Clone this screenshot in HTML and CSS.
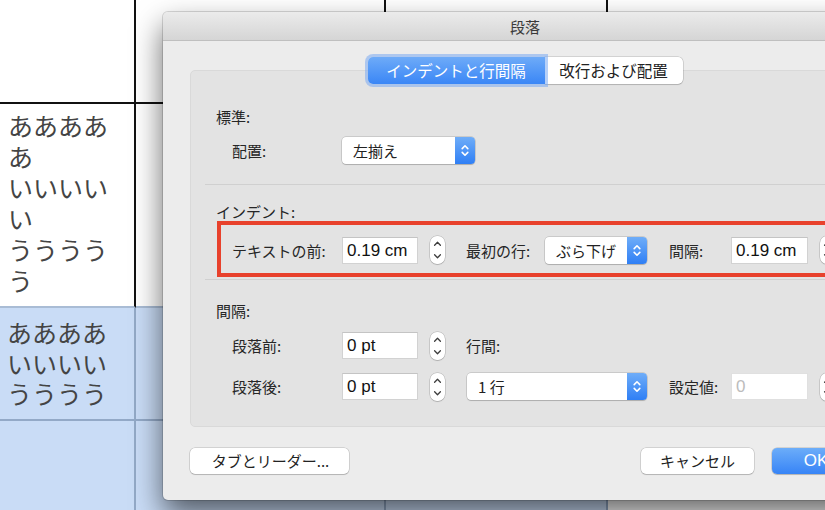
FILE: index.html
```html
<!DOCTYPE html>
<html lang="ja">
<head>
<meta charset="utf-8">
<title>段落</title>
<link rel="stylesheet" href="styles.css">
</head>
<body>
<div class="doc">
  <div class="cell"></div><div class="cell"></div><div class="cell"></div><div class="cell c4"></div>
  <div class="cell pre txt">ああああ<br>あ<br>いいいい<br>い<br>うううう<br>う</div>
  <div class="cell pre"></div><div class="cell pre"></div><div class="cell c4"></div>
  <div class="cell sel txt t2">ああああ<br>いいいい<br>うううう</div>
  <div class="cell sel"></div><div class="cell sel"></div><div class="cell c4"></div>
  <div class="cell sel"></div><div class="cell sel"></div><div class="cell sel"></div><div class="cell c4"></div>
</div>

<div class="dialog">
  <div class="titlebar">段落</div>
  <div class="dlg-body">
    <div class="group">
      <div class="tabs">
        <span class="tab on">インデントと行間隔</span><span class="tab off">改行および配置</span>
      </div>

      <div class="heading h-std">標準:</div>
      <div class="row r-align">
        <span class="lbl">配置:</span>
        <div class="popup w-align"><span class="pv">左揃え</span><span class="pa"><svg width="8" height="15" viewBox="0 0 8 15"><path d="M1.2 5.6 L4 2.8 L6.8 5.6 M1.2 9.4 L4 12.2 L6.8 9.4"/></svg></span></div>
      </div>

      <div class="sep s1"></div>

      <div class="heading h-ind">インデント:</div>
      <div class="row hl">
        <span class="lbl">テキストの前:</span>
        <div class="field">0.19 cm</div>
        <div class="stepper"><svg width="15" height="28" viewBox="0 0 15 28"><path d="M4.6 9.2 L7.5 6.3 L10.4 9.2 M4.6 18.8 L7.5 21.7 L10.4 18.8"/></svg></div>
        <span class="lbl l2">最初の行:</span>
        <div class="popup w-first"><span class="pv">ぶら下げ</span><span class="pa"><svg width="8" height="15" viewBox="0 0 8 15"><path d="M1.2 5.6 L4 2.8 L6.8 5.6 M1.2 9.4 L4 12.2 L6.8 9.4"/></svg></span></div>
        <span class="lbl l3">間隔:</span>
        <div class="field f2">0.19 cm</div>
        <div class="stepper"><svg width="15" height="28" viewBox="0 0 15 28"><path d="M4.6 9.2 L7.5 6.3 L10.4 9.2 M4.6 18.8 L7.5 21.7 L10.4 18.8"/></svg></div>
      </div>

      <div class="sep s2"></div>

      <div class="heading h-sp">間隔:</div>
      <div class="row r-before">
        <span class="lbl">段落前:</span>
        <div class="field">0 pt</div>
        <div class="stepper"><svg width="15" height="28" viewBox="0 0 15 28"><path d="M4.6 9.2 L7.5 6.3 L10.4 9.2 M4.6 18.8 L7.5 21.7 L10.4 18.8"/></svg></div>
        <span class="lbl l2">行間:</span>
      </div>
      <div class="row r-after">
        <span class="lbl">段落後:</span>
        <div class="field">0 pt</div>
        <div class="stepper"><svg width="15" height="28" viewBox="0 0 15 28"><path d="M4.6 9.2 L7.5 6.3 L10.4 9.2 M4.6 18.8 L7.5 21.7 L10.4 18.8"/></svg></div>
        <div class="popup w-line"><span class="pv">1 行</span><span class="pa"><svg width="8" height="15" viewBox="0 0 8 15"><path d="M1.2 5.6 L4 2.8 L6.8 5.6 M1.2 9.4 L4 12.2 L6.8 9.4"/></svg></span></div>
        <span class="lbl l3">設定値:</span>
        <div class="field f2 dis">0</div>
        <div class="stepper"><svg width="15" height="28" viewBox="0 0 15 28"><path d="M4.6 9.2 L7.5 6.3 L10.4 9.2 M4.6 18.8 L7.5 21.7 L10.4 18.8"/></svg></div>
      </div>
    </div>

    <div class="buttons">
      <div class="btn b-tabs">タブとリーダー...</div>
      <div class="btn b-cancel">キャンセル</div>
      <div class="btn b-ok">OK</div>
    </div>
  </div>
</div>
</body>
</html>
```

FILE: styles.css
```css
* { box-sizing: border-box; }
html, body { margin: 0; padding: 0; }
body {
  width: 825px;
  height: 510px;
  overflow: hidden;
  position: relative;
  background: #fff;
  font-family: "Liberation Sans", "Noto Sans CJK JP", sans-serif;
}

/* ---------- document table ---------- */
.doc {
  display: grid;
  grid-template-columns: 136px 250px 222px 400px;
  grid-template-rows: 104px 204px 113px 120px;
}
.cell {
  border-right: 2px solid #111;
  border-bottom: 2px solid #111;
  background: #fff;
}
.cell.c4 { border-right: none; }
.cell.pre { border-bottom-color: #a9bcd5; }
.cell.sel { background: #c9dcf6; border-color: #93a9c7; }
.txt {
  font-family: "Noto Sans CJK JP", sans-serif;
  font-size: 25px;
  line-height: 31px;
  color: #444;
  padding: 6px 0 0 8px;
}
.txt.t2 { padding: 9px 0 0 7px; line-height: 30.5px; }

/* ---------- dialog ---------- */
.dialog {
  position: absolute;
  left: 163px;
  top: 12px;
  width: 724px;
  height: 488px;
  background: #ececec;
  border-radius: 5px;
  box-shadow: 0 0 0 1px rgba(0,0,0,0.14), 0 14px 30px rgba(0,0,0,0.6);
  overflow: hidden;
  display: flex;
  flex-direction: column;
}
.titlebar {
  height: 29px;
  background: linear-gradient(#ebebeb, #d5d5d5);
  border-bottom: 1px solid #bfbfbf;
  text-align: center;
  font-family: "Noto Sans CJK JP", sans-serif;
  font-size: 15px;
  line-height: 28px;
  padding-top: 1px;
  color: #3a3a3a;
}
.dlg-body {
  padding: 29px 27px 0 27px;
  display: flex;
  flex-direction: column;
}
.group {
  height: 357px;
  background: #e3e3e3;
  border: 1px solid #d9d9d9;
  border-radius: 5px;
  display: flex;
  flex-direction: column;
  font-family: "Noto Sans CJK JP", sans-serif;
  font-size: 15px;
  color: #262626;
}

/* tabs */
.tabs {
  align-self: center;
  margin-top: -14px;
  height: 27px;
  display: flex;
}
.tab {
  height: 27px;
  line-height: 27px;
  font-size: 15.5px;
  text-align: center;
}
.tab.on {
  width: 177px;
  color: #fff;
  background: linear-gradient(#6eabf8, #3a86f6);
  border-radius: 5px 0 0 5px;
  box-shadow: 0 0 0 3px rgba(122,170,242,0.55);
  position: relative;
  z-index: 1;
}
.tab.off {
  width: 138px;
  color: #222;
  background: #fff;
  border-radius: 0 5px 5px 0;
  box-shadow: 0 0 0 0.5px rgba(0,0,0,0.22), 0 1px 1px rgba(0,0,0,0.12);
}

/* headings and rows */
.heading {
  margin-left: 25px;
  line-height: 20px;
  height: 20px;
}
.h-std { margin-top: 23px; }
.h-ind { margin-top: 18px; height: 18px; line-height: 18px; }
.h-sp { margin-top: 21px; }

.row {
  display: flex;
  align-items: center;
  height: 27px;
  margin-left: 41px;
}
.r-align { margin-top: 10px; }
.r-before { margin-top: 11px; }
.r-after { margin-top: 14px; }

.row.hl {
  height: 56px;
  margin-left: 26px;
  margin-right: 12px;
  border: 4px solid #e8412c;
  padding-left: 11px;
  padding-top: 2px;
}

.sep {
  height: 1px;
  background: #d0d0d0;
  margin-left: 14px;
  margin-right: 14px;
}
.s1 { margin-top: 20px; }
.s2 { margin-top: 2px; }

.lbl { width: 110px; flex: none; white-space: nowrap; }
.lbl.l2 { width: 79px; margin-left: 21px; }
.lbl.l3 { width: 62px; margin-left: 22px; }

/* controls */
.field {
  width: 76px;
  height: 27px;
  flex: none;
  background: #fff;
  border: 1px solid #d2d2d2;
  border-top-color: #c4c4c4;
  font-family: "Liberation Sans", sans-serif;
  font-size: 17px;
  line-height: 25px;
  padding-left: 4px;
  color: #111;
}
.field.f2 { width: 77px; }
.field.dis { color: #bcbcbc; border-color: #e0e0e0; }

.stepper {
  width: 15px;
  height: 28px;
  flex: none;
  margin-left: 12px;
  background: #fff;
  border-radius: 7px;
  box-shadow: 0 0 0 0.5px rgba(0,0,0,0.22), 0 1px 1px rgba(0,0,0,0.12);
  display: flex;
}
.stepper path { fill: none; stroke: #3c3c3c; stroke-width: 1.3; stroke-linecap: round; stroke-linejoin: round; }

.popup {
  height: 27px;
  flex: none;
  display: flex;
  background: #fff;
  border-radius: 4px;
  box-shadow: 0 0 0 0.5px rgba(0,0,0,0.22), 0 1px 1px rgba(0,0,0,0.14);
}
.w-align { width: 133px; }
.w-first { width: 102px; }
.w-line { width: 180px; margin-left: 22px; }
.pv {
  flex: 1;
  line-height: 27px;
  padding-left: 11px;
  font-size: 15px;
  color: #222;
  white-space: nowrap;
}
.pa {
  width: 20px;
  flex: none;
  border-radius: 0 4px 4px 0;
  background: linear-gradient(#6fadf8, #2f7ff5);
  display: flex;
  align-items: center;
  justify-content: center;
}
.pa path { fill: none; stroke: #fff; stroke-width: 1.6; stroke-linecap: round; stroke-linejoin: round; }

/* buttons */
.buttons {
  display: flex;
  margin-top: 21px;
  height: 26px;
  gap: 18px;
}
.btn {
  height: 26px;
  line-height: 26px;
  text-align: center;
  font-family: "Noto Sans CJK JP", sans-serif;
  font-size: 15px;
  color: #222;
  background: #fff;
  border-radius: 5px;
  box-shadow: 0 0 0 0.5px rgba(0,0,0,0.22), 0 1px 1px rgba(0,0,0,0.14);
}
.b-tabs { width: 159px; padding-left: 2px; }
.b-cancel { width: 113px; margin-left: auto; }
.b-ok {
  width: 88px;
  color: #fff;
  font-family: "Liberation Sans", sans-serif;
  font-size: 17px;
  background: linear-gradient(#6cadf9, #3784f6);
}
```
